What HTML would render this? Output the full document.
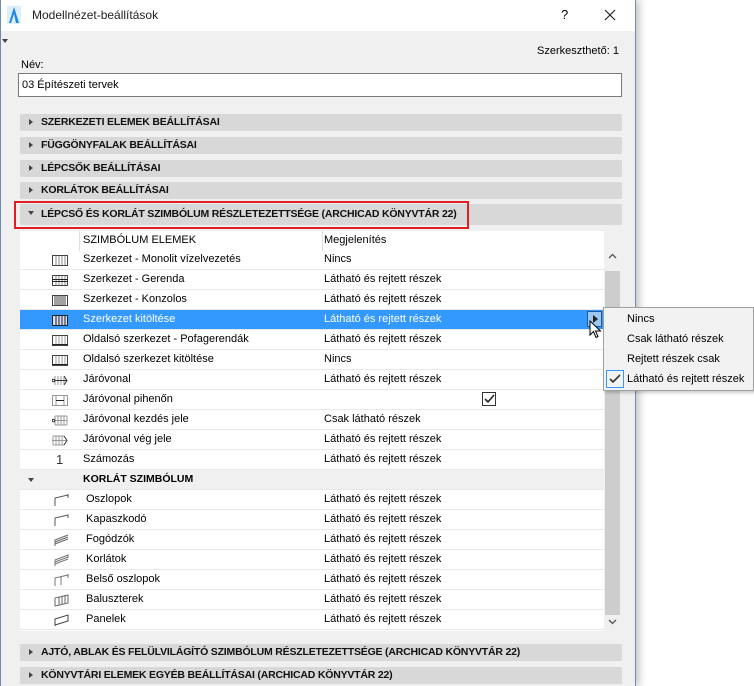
<!DOCTYPE html>
<html><head><meta charset="utf-8"><style>
*{margin:0;padding:0;box-sizing:border-box}
body{width:754px;height:686px;background:#fff;font-family:"Liberation Sans",sans-serif;font-size:11px;color:#000;position:relative;overflow:hidden}
.a{position:absolute}
.win{left:0;top:0;width:636px;height:686px;background:#f0f0f0;border-left:1px solid #6f8db0;border-right:1px solid #6f8db0;box-shadow:3px 0 8px rgba(0,0,0,.25)}
.tb{left:1px;top:0;width:634px;height:31px;background:#fff}
.sec{left:20px;width:602px;height:17px;background:#d8d8d8;border-radius:2px;font-weight:bold;font-size:10.5px;letter-spacing:-0.2px;line-height:17px;padding-left:21px;color:#111}
.sec:before{content:"";position:absolute;left:9px;top:5px;border-left:4px solid #444;border-top:3.5px solid transparent;border-bottom:3.5px solid transparent}
.sec.open:before{left:8px;top:7px;border-top:4px solid #444;border-left:3.5px solid transparent;border-right:3.5px solid transparent;border-bottom:0}
.tbl{left:20px;top:231px;width:584px;height:400px;background:#fff}
.row{position:absolute;left:0;width:584px;height:20px;border-bottom:1px solid #e8e8e8;line-height:19px}
.row .n{position:absolute;left:63px}
.row .v{position:absolute;left:304px}
.row svg{position:absolute;left:32px;top:3px}
.sel{background:#3399ff;color:#fff}
.sb{left:604px;top:231px;width:17px;height:400px;background:#f0f0f0}
.menu{left:603px;top:307px;width:151px;height:84px;background:#f2f2f2;border:1px solid #a0a0a0;box-shadow:2px 2px 3px rgba(0,0,0,.2)}
.menu div{position:absolute;left:23px;line-height:20px}
</style></head><body>
<div class="a win"></div>
<div class="a tb"></div>
<svg class="a" style="left:7px;top:6px" width="14" height="18" viewBox="0 0 14 18"><rect x="0" y="0" width="14" height="18" fill="#ddeeff"/><path d="M2 17 L7 1 L12 17 L9 17 L7 8 L4 17Z" fill="#1e88e5"/></svg>
<div class="a" style="left:32px;top:8px;font-size:12px;color:#222">Modellnézet-beállítások</div>
<div class="a" style="left:561px;top:7px;font-size:13px">?</div>
<svg class="a" style="left:604px;top:9px" width="12" height="12"><path d="M1 1L11 11M11 1L1 11" stroke="#222" stroke-width="1.2"/></svg>
<div class="a" style="left:2px;top:39px;border-top:4px solid #444;border-left:3px solid transparent;border-right:3px solid transparent"></div>
<div class="a" style="left:537px;top:45px;font-size:11px">Szerkeszthető: 1</div>
<div class="a" style="left:21px;top:59px">Név:</div>
<div class="a" style="left:18px;top:73px;width:604px;height:24px;background:#fff;border:1px solid #7a7a7a;line-height:22px;padding-left:3px">03 Építészeti tervek</div>
<div class="a sec" style="top:114px">SZERKEZETI ELEMEK BEÁLLÍTÁSAI</div>
<div class="a sec" style="top:137px">FÜGGÖNYFALAK BEÁLLÍTÁSAI</div>
<div class="a sec" style="top:160px">LÉPCSŐK BEÁLLÍTÁSAI</div>
<div class="a sec" style="top:182px">KORLÁTOK BEÁLLÍTÁSAI</div>
<div class="a sec open" style="top:204px;height:21px;line-height:21px">LÉPCSŐ ÉS KORLÁT SZIMBÓLUM RÉSZLETEZETTSÉGE (ARCHICAD KÖNYVTÁR 22)</div>
<div class="a" style="left:14px;top:201px;width:455px;height:28px;border:2px solid #e02020"></div>
<div class="a tbl">
<div class="row" style="top:0;border-bottom:none"><span style="position:absolute;left:59px;top:0;height:20px;border-left:1px solid #e0e0e0"></span><span class="n">SZIMBÓLUM ELEMEK</span><span style="position:absolute;left:302px;top:0;height:20px;border-left:1px solid #e0e0e0"></span><span class="v">Megjelenítés</span></div>
<div class="row" style="top:19px"><svg width="16" height="14"><rect x="0.5" y="2.5" width="15" height="10" fill="none" stroke="#444"/><path d="M4 3v9M7 3v9M10 3v9M13 3v9" stroke="#888"/></svg><span class="n">Szerkezet - Monolit vízelvezetés</span><span class="v">Nincs</span></div>
<div class="row" style="top:39px"><svg width="16" height="14"><rect x="0.5" y="2.5" width="15" height="10" fill="none" stroke="#444"/><path d="M4 3v9M7 3v9M10 3v9M13 3v9" stroke="#888"/><path d="M0 6.5h16M0 8.5h16" stroke="#222"/></svg><span class="n">Szerkezet - Gerenda</span><span class="v">Látható és rejtett részek</span></div>
<div class="row" style="top:59px"><svg width="16" height="14"><rect x="0.5" y="2.5" width="15" height="10" fill="none" stroke="#444"/><path d="M3 3v9M5 3v9M7 3v9M9 3v9M11 3v9M13 3v9" stroke="#444"/></svg><span class="n">Szerkezet - Konzolos</span><span class="v">Látható és rejtett részek</span></div>
<div class="row sel" style="top:79px"><svg width="16" height="14"><rect x="0.5" y="2.5" width="15" height="10" fill="#dde" stroke="#123"/><path d="M4 3v9M7 3v9M10 3v9M13 3v9" stroke="#123"/></svg><span class="n">Szerkezet kitöltése</span><span class="v">Látható és rejtett részek</span><span style="position:absolute;left:567px;top:1px;width:15px;height:16px;background:#9cc7f5;border:1px solid #1b5b9e"></span><span style="position:absolute;left:573px;top:5px;border-left:5px solid #222;border-top:4px solid transparent;border-bottom:4px solid transparent"></span></div>
<div class="row" style="top:99px"><svg width="16" height="14"><rect x="0.5" y="2.5" width="15" height="10" fill="none" stroke="#444"/><path d="M4 3v9M7 3v9M10 3v9M13 3v9" stroke="#999"/><path d="M0 11.5h16" stroke="#222"/></svg><span class="n">Oldalsó szerkezet - Pofagerendák</span><span class="v">Látható és rejtett részek</span></div>
<div class="row" style="top:119px"><svg width="16" height="14"><rect x="0.5" y="2.5" width="15" height="10" fill="none" stroke="#444"/><path d="M4 3v9M7 3v9M10 3v9M13 3v9" stroke="#999"/><path d="M0 11.5h16" stroke="#222"/></svg><span class="n">Oldalsó szerkezet kitöltése</span><span class="v">Nincs</span></div>
<div class="row" style="top:139px"><svg width="16" height="14"><path d="M3 3v9M6 3v9M9 3v9M12 3v9" stroke="#999"/><path d="M0 7.5h15M12 3l3 4.5-3 4.5" stroke="#333" fill="none"/><circle cx="1.5" cy="7.5" r="1.3" fill="#fff" stroke="#333"/></svg><span class="n">Járóvonal</span><span class="v">Látható és rejtett részek</span></div>
<div class="row" style="top:159px"><svg width="16" height="14"><rect x="0.5" y="2.5" width="15" height="10" fill="none" stroke="#999"/><path d="M4 3v9M12 3v9" stroke="#999"/><path d="M4 7.5h8" stroke="#222"/></svg><span class="n">Járóvonal pihenőn</span><span style="position:absolute;left:462px;top:2px;width:14px;height:14px;border:1px solid #333;background:#fff"></span><svg style="left:464px;top:4px" width="11" height="10"><path d="M1 5l3 3 6-7" stroke="#222" stroke-width="1.6" fill="none"/></svg></div>
<div class="row" style="top:179px"><svg width="16" height="14"><path d="M3 3v9M6 3v9M9 3v9M12 3v9M15 3v9M3 3h12M3 12h12M0 7.5h15" stroke="#999"/><circle cx="1.5" cy="7.5" r="1.3" fill="#fff" stroke="#333"/></svg><span class="n">Járóvonal kezdés jele</span><span class="v">Csak látható részek</span></div>
<div class="row" style="top:199px"><svg width="16" height="14"><path d="M1 3v9M4 3v9M7 3v9M10 3v9M1 3h11M1 12h11M0 7.5h14" stroke="#999"/><path d="M12 3l3 4.5-3 4.5" stroke="#333" fill="none"/></svg><span class="n">Járóvonal vég jele</span><span class="v">Látható és rejtett részek</span></div>
<div class="row" style="top:219px"><span style="position:absolute;left:36px;font-size:13px;color:#333">1</span><span class="n">Számozás</span><span class="v">Látható és rejtett részek</span></div>
<div class="row" style="top:239px;background:#f0f0f0"><span style="position:absolute;left:8px;top:8px;border-top:4px solid #444;border-left:3.5px solid transparent;border-right:3.5px solid transparent"></span><span class="n" style="font-weight:bold;font-size:10.5px">KORLÁT SZIMBÓLUM</span></div>
<div class="row" style="top:259px"><svg width="16" height="14" style="left:34px"><path d="M1 13V5l13-3M14 1v4" stroke="#555" fill="none"/></svg><span class="n" style="left:66px">Oszlopok</span><span class="v">Látható és rejtett részek</span></div>
<div class="row" style="top:279px"><svg width="16" height="14" style="left:34px"><path d="M1 13V5l13-3v3" stroke="#555" fill="none"/></svg><span class="n" style="left:66px">Kapaszkodó</span><span class="v">Látható és rejtett részek</span></div>
<div class="row" style="top:299px"><svg width="16" height="14" style="left:34px"><path d="M1 13V7l13-5M1 9l13-5M1 11l13-5" stroke="#666" fill="none"/></svg><span class="n" style="left:66px">Fogódzók</span><span class="v">Látható és rejtett részek</span></div>
<div class="row" style="top:319px"><svg width="16" height="14" style="left:34px"><path d="M1 13V7l13-5v3M1 9l13-5M1 11l13-5" stroke="#777" fill="none"/></svg><span class="n" style="left:66px">Korlátok</span><span class="v">Látható és rejtett részek</span></div>
<div class="row" style="top:339px"><svg width="16" height="14" style="left:34px"><path d="M1 13V5l13-3M7 3v9M14 1v4" stroke="#777" fill="none"/></svg><span class="n" style="left:66px">Belső oszlopok</span><span class="v">Látható és rejtett részek</span></div>
<div class="row" style="top:359px"><svg width="16" height="14" style="left:34px"><path d="M1 13V5l13-3v8L1 13M5 4v8M8 3v8M11 2v8" stroke="#666" fill="none"/></svg><span class="n" style="left:66px">Baluszterek</span><span class="v">Látható és rejtett részek</span></div>
<div class="row" style="top:379px"><svg width="16" height="14" style="left:34px"><path d="M1 13V6l13-4v6L1 12" stroke="#444" fill="none"/></svg><span class="n" style="left:66px">Panelek</span><span class="v">Látható és rejtett részek</span></div>
</div>
<div class="a sb"><div class="a" style="left:1px;top:40px;width:15px;height:344px;background:#cdcdcd"></div>
<svg class="a" style="left:4px;top:22px" width="9" height="6"><path d="M1 5l3.5-3.5L8 5" stroke="#555" fill="none" stroke-width="1.3"/></svg>
<svg class="a" style="left:4px;top:388px" width="9" height="6"><path d="M1 1l3.5 3.5L8 1" stroke="#555" fill="none" stroke-width="1.3"/></svg></div>
<div class="a sec" style="top:644px">AJTÓ, ABLAK ÉS FELÜLVILÁGÍTÓ SZIMBÓLUM RÉSZLETEZETTSÉGE (ARCHICAD KÖNYVTÁR 22)</div>
<div class="a sec" style="top:667px">KÖNYVTÁRI ELEMEK EGYÉB BEÁLLÍTÁSAI (ARCHICAD KÖNYVTÁR 22)</div>
<div class="a menu">
<div style="top:1px">Nincs</div>
<div style="top:21px">Csak látható részek</div>
<div style="top:41px">Rejtett részek csak</div>
<div style="top:61px">Látható és rejtett részek</div>
<span style="position:absolute;left:2px;top:62px;width:18px;height:18px;border:1px solid #3399ff"></span>
<svg style="position:absolute;left:5px;top:66px" width="12" height="10"><path d="M1 5l3 3 7-7" stroke="#333" stroke-width="1.6" fill="none"/></svg>
</div>
<svg class="a" style="left:589px;top:320px" width="14" height="20"><path d="M1 1v14l3.5-3.5 2.5 6 2-1-2.5-5.5h5z" fill="#fff" stroke="#000"/></svg>
</body></html>
